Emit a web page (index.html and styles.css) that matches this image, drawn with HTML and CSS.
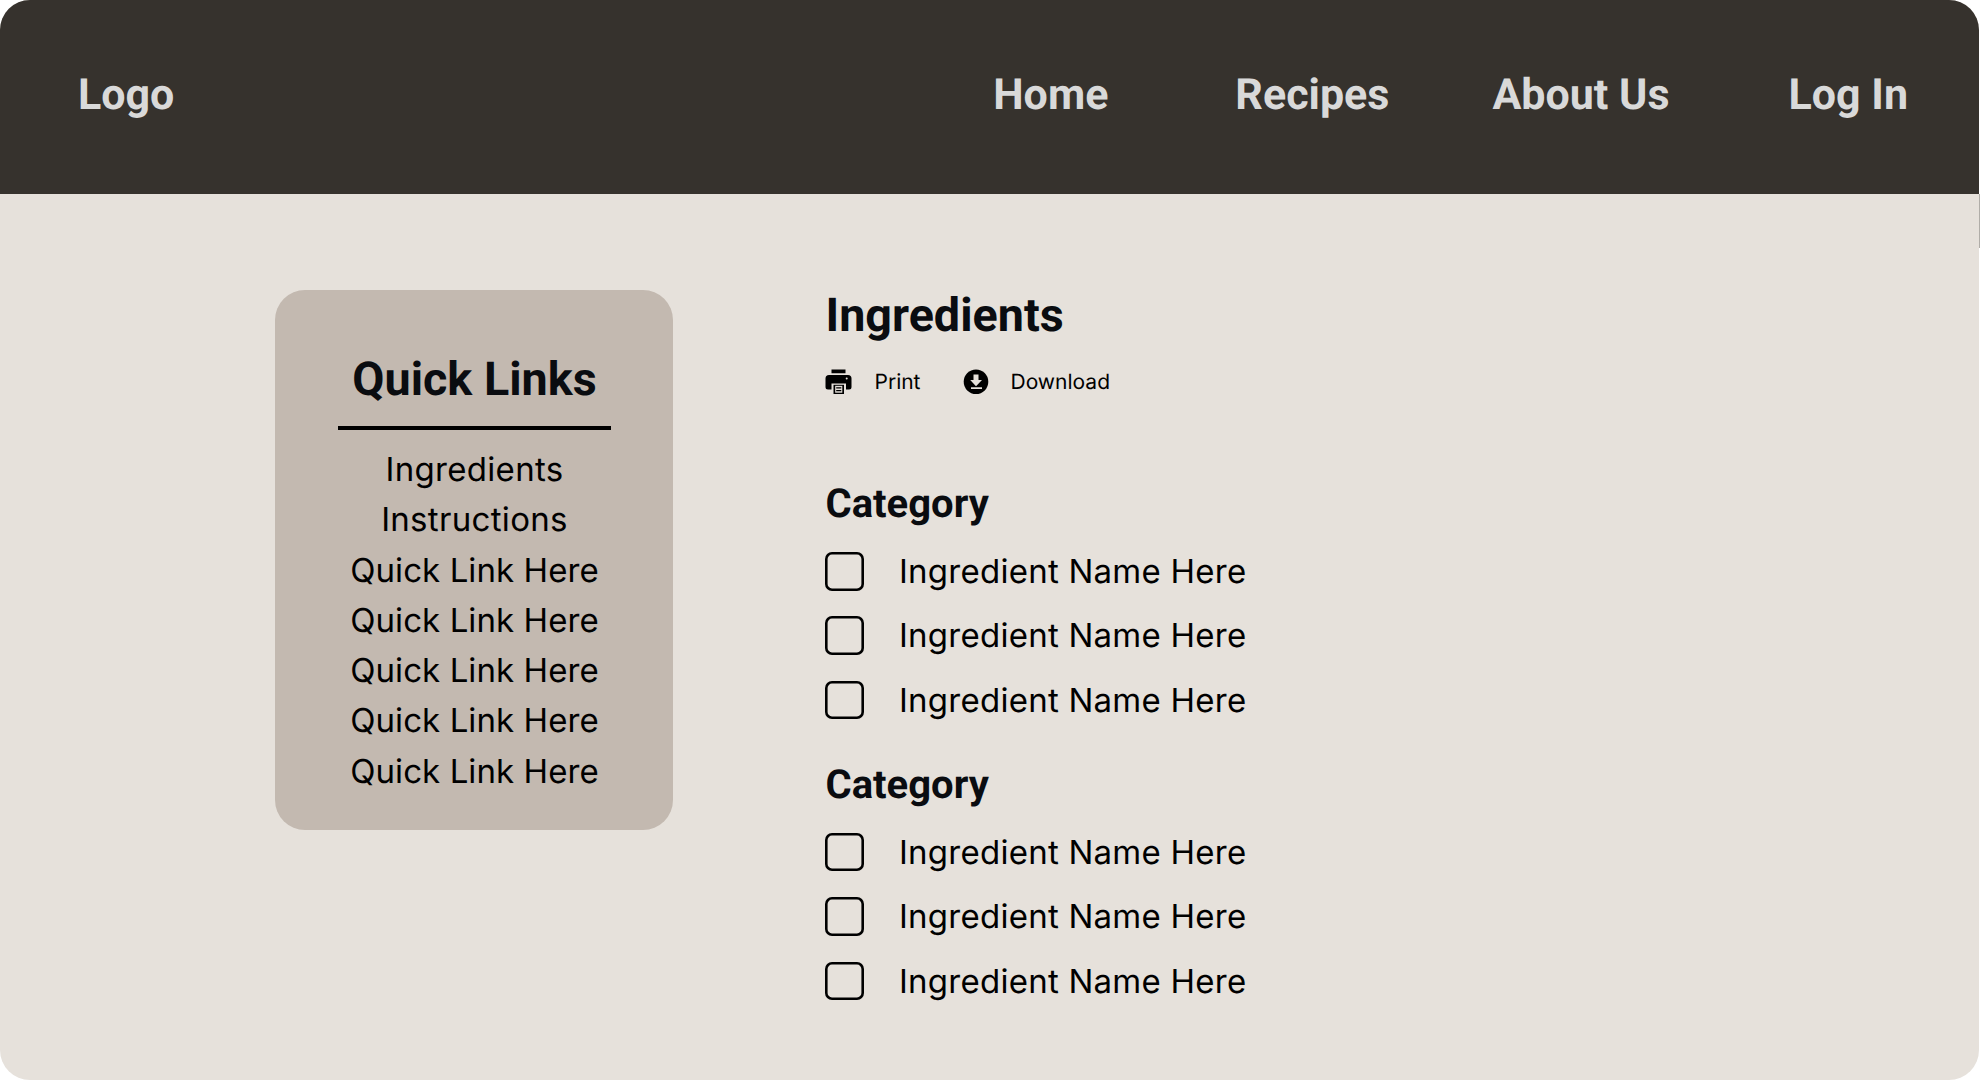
FILE: index.html
```html
<!DOCTYPE html>
<html lang="en">
<head>
<meta charset="utf-8">
<title>Recipe ingredients</title>
<link rel="stylesheet" href="styles.css">
</head>
<body>
<div class="page">
  <header class="header">
    <a class="logo">Logo</a>
    <nav class="nav"><a>Home</a><a>Recipes</a><a>About Us</a><a>Log In</a></nav>
  </header>
  <main class="main">
    <aside class="quick">
      <h2 class="quick-title">Quick Links</h2>
      <ul class="quick-list">
        <li class="section-link">Ingredients</li><li class="section-link">Instructions</li><li>Quick Link Here</li><li>Quick Link Here</li><li>Quick Link Here</li><li>Quick Link Here</li><li>Quick Link Here</li>
      </ul>
    </aside>
    <section class="content">
      <h1 class="title">Ingredients</h1>
      <div class="actions">
        <a class="action print"><svg class="icon" viewBox="0 0 28 28"><path d="M6.500 1.500h14v3.800h-14zM4 7h19a3.500 3.500 0 0 1 3.500 3.500V19a2.500 2.500 0 0 1-2.500 2.500h-3V15.500H6.500v6H3A2.500 2.500 0 0 1 .500 19v-8.500A3.500 3.500 0 0 1 4 7z"/><path d="M8.500 16.800h10.500v9.200H8.500z"/><path d="M10.200 17.800h7.100v6.900h-7.100z" fill="#e6e1db"/><path d="M11.200 19.300h5.100v1.300h-5.100zM11.200 22h5.100v1.300h-5.100z"/><circle cx="21.700" cy="10.500" r="1" fill="#e6e1db"/></svg><span>Print</span></a>
        <a class="action"><svg class="icon" viewBox="0 0 28 28"><circle cx="14" cy="13.700" r="12.300"/><path d="M11.500 6.500h5v5.500H20l-6 6.300L8.200 12h3.300zM9 19.200h11v1.900H9z" fill="#e6e1db"/></svg><span>Download</span></a>
      </div>
      <div class="group">
        <h2 class="category">Category</h2>
        <ul class="items">
          <li><span class="box"></span>Ingredient Name Here</li><li><span class="box"></span>Ingredient Name Here</li><li><span class="box"></span>Ingredient Name Here</li>
        </ul>
      </div>
      <div class="group">
        <h2 class="category">Category</h2>
        <ul class="items">
          <li><span class="box"></span>Ingredient Name Here</li><li><span class="box"></span>Ingredient Name Here</li><li><span class="box"></span>Ingredient Name Here</li>
        </ul>
      </div>
    </section>
  </main>
</div>
</body>
</html>
```
FILE: styles.css
```css
* { box-sizing: border-box; margin: 0; padding: 0; }
body { position: relative; background: #fff; color: #000; font-family: Inter, sans-serif; text-rendering: geometricPrecision; }
/* Thin scroll marker on the right edge */
body::after { content: ""; position: absolute; top: 194px; right: 0; width: 1px; height: 54px; background: #b0ada8; }
ul { list-style: none; }
.page { width: 1979px; height: 1080px; border-radius: 30px; overflow: hidden; background: #e6e1db; }
.header { display: flex; justify-content: space-between; height: 194px; padding: 70px 71px 0 78px; background: #36322d; color: #d9d9d9; font: bold 43px/51px Roboto, sans-serif; }
.nav { display: flex; }
.nav a:nth-child(1) { margin-right: 127px; }
.nav a:nth-child(2) { margin-right: 103px; }
.nav a:nth-child(3) { margin-right: 119px; }
.main { display: flex; gap: 152.500px; padding: 96px 0 0 275.300px; align-items: flex-start; }
.quick { width: 397.700px; height: 539.700px; padding: 62px 62px 0 62.700px; border-radius: 30px; background: #c3b9b0; text-align: center; }
.quick-title { height: 78px; border-bottom: 4px solid #000; color: #0a0c10; font: bold 46.700px/56px Roboto, sans-serif; }
.quick-list { padding-top: 14px; font-size: 33px; line-height: 50.300px; letter-spacing: 0.080px; white-space: nowrap; }
.section-link { letter-spacing: 0.320px; }
.title { padding-top: 1px; color: #0a0c10; font: bold 46.700px/51px Roboto, sans-serif; }
.actions { display: flex; gap: 41px; height: 80px; padding-top: 26px; font-size: 21px; line-height: 30px; }
.action { display: flex; gap: 21px; height: 28px; }
.icon { width: 28px; height: 28px; }
.group { padding-top: 56px; }
.group + .group { padding-top: 39px; }
.category { color: #0a0c10; font: bold 40px/52px Roboto, sans-serif; }
.items { display: flex; flex-direction: column; gap: 25.400px; padding-top: 22px; font-size: 33px; line-height: 39px; letter-spacing: 0.250px; }
.items li { display: flex; gap: 35px; white-space: nowrap; }
.box { width: 38.500px; height: 38.500px; border-radius: 7px; box-shadow: inset 0 0 0 2.600px #000; }
```
